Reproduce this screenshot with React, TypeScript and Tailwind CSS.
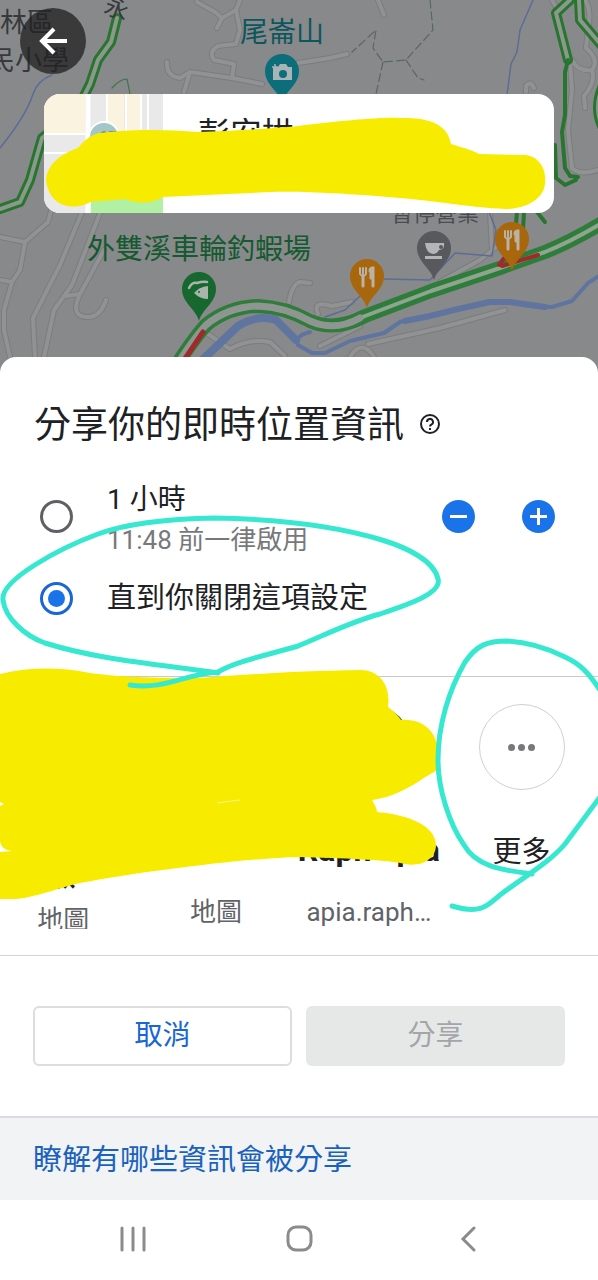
import React, { useState } from 'react';
import clsx from 'clsx';

interface ShareTarget {
  label: string[];
  detail?: string;
  avatar: string;
}

const targets: ShareTarget[] = [
  { label: ['', '款'], detail: '地圖', avatar: 'bg-slate-300' },
  { label: [''], detail: '地圖', avatar: 'bg-slate-300' },
  { label: ['Raph apia'], detail: 'apia.raph…', avatar: 'bg-[#2f6b3f]' },
];

const minorRoads = [
  'M197 2 L215 12 L222 18 M222 18 L217 28 M222 18 L236 10 L240 0 M236 10 L240 30 L236 44 L218 46 Q208 52 214 60 L234 64 L232 78',
  'M167 62 Q166 76 180 78 L190 72 L232 78 L262 84 M190 72 L184 92',
  'M298 63 L330 58 L347 54 M378 0 L384 15',
  'M585 0 Q592 10 588 30 L586 48 Q600 60 592 70 Q578 72 572 60 M592 70 Q596 82 584 96 L585 108',
  'M570 62 L572 90 L568 130 L572 168 Q580 176 598 170',
  'M526 92 V86 Q530 80 534 88 M0 237 L25 242 L48 222 L54 200 M25 242 L20 270 L12 282 L0 280 M12 282 L4 310 L4 330 L10 357',
  'M85 205 L60 265 L33 318 L35 357 M102 208 L72 285 L54 310 L44 357 M66 296 L80 294 L104 250 M80 294 Q70 316 86 317 Q100 318 106 300',
  'M289 302 Q292 284 300 282 L310 283 M208 334 L230 349 Q250 338 270 342 L285 356',
  'M318 314 Q312 300 332 306 L352 302 M320 346 L360 326 M350 357 Q362 338 374 357 M368 344 L440 328 L505 310',
  'M490 212 L492 250 M440 282 L480 260 L500 244 M552 0 L558 10',
];

const trafficRoads = [
  'M117 18 L111 42 L98 60 L90 84 L76 112 L42 138 L30 180 L20 202 L0 209',
  'M570 0 L556 13 L568 60',
  'M579 0 L580 20 L602 46',
  'M602 88 Q594 108 602 126',
];

const mainRoad =
  'M176 366 Q194 338 206 325 Q228 307 258 306 Q285 307 310 321 Q335 332 365 316 L431 291 L500 268 L545 252 Q570 242 602 223';

const DiningGlyph: React.FC = () => (
  <g stroke="#b9b2a5" strokeWidth="2" strokeLinecap="round" fill="none">
    <path d="M-7 -9 V-3 M-4 -9 V-3 M-1 -9 V-3 M-7 -3 Q-4 1 -1 -3" />
    <path d="M-4 -1 V9" strokeWidth="3" />
    <path d="M3 -6 Q3 -9 6 -9 V9 M4 -5 V1" strokeWidth="3" />
  </g>
);

const Pin: React.FC<{ x: number; y: number; color: string; children: React.ReactNode }> = ({ x, y, color, children }) => (
  <g transform={`translate(${x} ${y})`}>
    <path d="M0 31 C-3 19 -17 13 -17 -1 A17 17 0 0 1 17 -1 C17 13 3 19 0 31 Z" fill={color} />
    {children}
  </g>
);

const MapBackdrop: React.FC = () => (
  <svg
    className="absolute inset-0 w-full h-full"
    viewBox="0 0 598 373"
    preserveAspectRatio="xMidYMin slice"
    fontFamily='"Noto Sans CJK TC", sans-serif'
    aria-hidden="true"
  >
    <rect width="598" height="373" fill="#88898b" />
    <g fill="none" strokeLinejoin="round" strokeLinecap="round">
      {minorRoads.map((d) => (
        <path key={d} d={d} stroke="#7c7c7e" strokeWidth="6" />
      ))}
      {minorRoads.map((d) => (
        <path key={d} d={d} stroke="#919293" strokeWidth="4" />
      ))}
      <path d="M52 75 Q38 80 33 94 Q26 116 0 148" stroke="#5c6c96" strokeWidth="1.5" />
      <path d="M533 0 L520 30 L517 52 L511 64 L507 95" stroke="#5c6c96" strokeWidth="1.5" />
      <path d="M384 279 L430 280 L455 253 L492 256 L496 230 L489 212 M325 317 L345 310 L360 296" stroke="#5c6c96" strokeWidth="1.5" />
      <path d="M430 0 L433 30 L406 60 L383 62 L373 48 L376 30 L352 52 M383 62 L376 94 M406 60 L418 78 L424 80" stroke="#56695f" strokeWidth="1.2" strokeDasharray="8 4" />
      <path d="M112 88 Q120 79 127 79 L130 94" stroke="#3d7446" strokeWidth="1.2" />
      <path d="M196 366 L238 326 Q258 314 276 320 L296 340" stroke="#5f759f" strokeWidth="8" />
      <path d="M310 332 Q294 336 298 345 L312 353 L325 353 L350 341 L384 333 L400 322 L430 316 L458 309 L490 301 L510 302 L530 306 L552 307 L572 301 L588 283 L602 274" stroke="#5f759f" strokeWidth="4" />
      <path d="M405 321 L430 316 L458 309 L490 302 L510 302 L545 307" stroke="#5f759f" strokeWidth="6" />
      {trafficRoads.map((d) => (
        <path key={d} d={d} stroke="#28752f" strokeWidth="10" />
      ))}
      {trafficRoads.map((d) => (
        <path key={d} d={d} stroke="#8b988c" strokeWidth="4" />
      ))}
      <path d="M568 60 L565 72 L565 115 L562 132 L565 168 L570 176 L578 177 M555 145 L556 178 L565 185 L576 180 M517 212 L515 235 M524 212 L523 230 M537 212 L545 222" stroke="#28752f" strokeWidth="4" />
      <path d={mainRoad} stroke="#2f7d3a" strokeWidth="14" />
      <path d={mainRoad} stroke="#8fa590" strokeWidth="4" />
      <path d="M176 366 Q194 338 206 325 Q228 307 258 306 Q285 307 310 321 Q335 332 360 318" stroke="#8f9590" strokeWidth="7" />
      <path d="M180 366 L203 332" stroke="#a02a2a" strokeWidth="5" />
      <path d="M499 265 L507 254 M502 266 L538 255" stroke="#a02a2a" strokeWidth="4" />
    </g>
    <g fontSize="27" fill="#37393c">
      <text x="0" y="32">林區</text>
      <text x="-12" y="70">民小學</text>
      <text x="105" y="17" fontSize="24" transform="rotate(20 117 8)">永</text>
    </g>
    <text x="240" y="42" fontSize="28" fill="#0d565e">尾崙山</text>
    <text x="87" y="259" fontSize="28" fill="#14592f">外雙溪車輪釣蝦場</text>
    <text x="391" y="221" fontSize="22" fill="#4a4c4f">暫停營業</text>
    <Pin x={282} y={72} color="#0b6e7a">
      <path d="M-9 -5 H-4 L-2 -8 H4 L6 -5 H10 V8 H-9 Z" fill="#a9b4b5" />
      <circle cx="1" cy="2" r="4" fill="#0b6e7a" />
      <path d="M-10 -5 H-4 M-7 -8 V-2" stroke="#a9b4b5" strokeWidth="1.5" />
    </Pin>
    <Pin x={199} y={290} color="#17682f">
      <path d="M-5 3 Q0 -3 9 -4 V9 Q1 9 -5 3 Z" fill="#a9b5aa" />
      <path d="M-10 -2 Q-7 -8 -2 -7 Q4 -9 8 -8" stroke="#a9b5aa" strokeWidth="2.5" fill="none" strokeLinecap="round" />
      <circle cx="0" cy="2" r="1" fill="#17682f" />
    </Pin>
    <Pin x={434} y={249} color="#57595c">
      <path d="M-9 -6 H10 Q11 1 5 1 Q3 5 -1 5 Q-8 4 -9 -6 Z M-9 7 H8 V10 H-9 Z" fill="#b4b5b6" />
      <circle cx="7" cy="-2" r="2" fill="#57595c" />
    </Pin>
    <Pin x={367} y={277} color="#a8670c">
      <DiningGlyph />
    </Pin>
    <Pin x={512} y={240} color="#a8670c">
      <DiningGlyph />
    </Pin>
  </svg>
);

const PlaceThumbnail: React.FC = () => (
  <svg className="w-[119px] h-[119px] shrink-0" viewBox="0 0 119 119" aria-hidden="true">
    <rect width="119" height="119" fill="#e9e9ea" />
    <path d="M0 0 H41 V39 H0 Z M64 0 H80 V60 H64 Z M83 0 H96 V60 H83 Z" fill="#faf3e0" />
    <path d="M47 90 H119 V119 H47 Z" fill="#b2f0a4" />
    <path d="M44 0 V119" stroke="#fff" strokeWidth="5" />
    <path d="M0 40 H44 M0 59 H44 M63 0 V60 M82 0 V60 M97 0 V60 M104 0 V60" stroke="#fff" strokeWidth="2" />
    <circle cx="60" cy="43" r="15" fill="#a3c6c8" stroke="#fff" strokeWidth="2" />
    <path d="M56 42 Q60 36 64 42 M65 39 H73" stroke="#4c5040" strokeWidth="3" fill="none" />
  </svg>
);

const Markup: React.FC = () => (
  <svg className="absolute top-0 left-0 w-full h-auto pointer-events-none" viewBox="0 0 598 1280" aria-hidden="true">
    <g fill="#f7eb00">
      <path d="M46 180 C47 165 60 154 78 148 C88 136 95 132 110 132 C140 129 170 130 198 132 C230 131 280 128 298 126 C340 121 380 117 400 118 C430 117 448 125 451 144 C460 147 470 149 479 154 L525 155 C538 156 547 168 545 184 C543 200 525 209 505 209 C470 207 450 203 420 200 C370 195 310 191 270 192 L163 197 C150 205 135 203 125 199 L90 202 C80 209 50 212 46 180 Z" />
      <path d="M0 674 C30 667 60 667 90 673 C120 677 150 678 200 678 C250 674 300 671 360 670 C380 670 391 686 388 707 C394 711 398 716 401 720 C425 718 441 735 438 760 C438 768 436 772 432 773 C415 783 400 796 372 800 C374 804 377 808 377 812 C400 814 435 822 436 845 C436 860 420 867 405 864 C390 860 340 858 300 857 C250 858 150 870 80 883 C60 887 30 900 10 899 L0 899 V852 L12 851 C4 850 0 846 0 840 V806 L4 804 L0 802 Z" />
    </g>
    <path d="M217 803 L240 800" stroke="#f8f19a" strokeWidth="1" />
    <g fill="none" stroke="#36e8cf" strokeWidth="5" strokeLinecap="round" strokeLinejoin="round">
      <path d="M130 685 C165 690 185 674 218 672 C236 661 268 655 298 646 C325 635 350 622 380 614 C410 604 442 593 438 579 C434 560 405 547 382 540 C330 524 270 519 215 518 C165 519 125 524 98 534 C60 548 0 580 3 600 C5 618 25 636 45 643 C95 659 155 664 218 673" />
      <path d="M452 906 C482 915 488 905 500 895 C525 876 550 862 565 844 L600 797 M600 690 C588 672 580 664 565 657 C545 647 525 642 507 641 C487 641 477 645 465 662 C449 690 438 725 438 760 C438 790 450 825 464 845 C476 866 500 870 532 874" />
    </g>
  </svg>
);

const App: React.FC = () => {
  const [duration, setDuration] = useState('forever');
  const radioClass =
    'appearance-none shrink-0 w-[33px] h-[33px] rounded-full border-[3px] border-[#5f6063] p-[5px] bg-clip-content checked:border-[#1a67d2] checked:bg-[#1a73e8]';
  const stepClass = 'w-[33px] h-[33px] rounded-full bg-[#1a73e8] flex items-center justify-center';

  return (
    <div className="relative bg-white overflow-hidden text-[#202124] font-['Roboto','Noto_Sans_CJK_TC',sans-serif]" lang="zh-Hant">
      <header className="relative pt-2 pb-40">
        <MapBackdrop />
        <button
          aria-label="返回"
          className="relative ml-5 w-[66px] h-[66px] rounded-full bg-[#202020]/75 flex items-center justify-center"
        >
          <svg className="w-7 h-7" viewBox="0 0 28 28" fill="none" stroke="#fff" strokeWidth="4">
            <path d="M28 14 H4 M15 2 L3 14 L15 26" />
          </svg>
        </button>
        <div className="relative mt-5 ml-11 mr-11 flex bg-white rounded-2xl overflow-hidden">
          <PlaceThumbnail />
          <p className="pl-[35px] pt-5 text-[32px] leading-10">彭安拱</p>
        </div>
      </header>

      <main className="relative -mt-4 bg-white rounded-t-2xl pt-[45px]">
        <div className="px-[34px] flex items-center gap-4">
          <h1 className="text-[37px] leading-[48px]">分享你的即時位置資訊</h1>
          <button aria-label="說明" className="pb-1">
            <svg className="w-5 h-5" viewBox="0 0 20 20" fill="none" stroke="#202124" strokeWidth="2">
              <circle cx="10" cy="10" r="9" />
              <path d="M7 8 A3 3 0 1 1 11.5 10.5 Q10 11.3 10 12.5 M10 14 V16" />
            </svg>
          </button>
        </div>

        <div className="mt-[30px] pl-10 pr-[43px] flex items-start">
          <input
            id="one-hour"
            type="radio"
            name="duration"
            className={clsx(radioClass, 'mt-5')}
            checked={duration === 'hour'}
            onChange={() => setDuration('hour')}
          />
          <label htmlFor="one-hour" className="pl-[34px] flex-1">
            <span className="block text-[28px] leading-10">1 小時</span>
            <span className="block text-[26px] leading-10 text-[#77787b]">11:48 前一律啟用</span>
          </label>
          <div className="mt-5 flex gap-[47px]">
            <button aria-label="減少" className={stepClass}>
              <svg className="w-[17px] h-[17px]" viewBox="0 0 17 17" stroke="#fff" strokeWidth="3">
                <path d="M0 8.5 H17" />
              </svg>
            </button>
            <button aria-label="增加" className={stepClass}>
              <svg className="w-[17px] h-[17px]" viewBox="0 0 17 17" stroke="#fff" strokeWidth="3">
                <path d="M0 8.5 H17 M8.5 0 V17" />
              </svg>
            </button>
          </div>
        </div>

        <div className="mt-[18px] pl-10 flex items-center">
          <input
            id="until-off"
            type="radio"
            name="duration"
            className={radioClass}
            checked={duration === 'forever'}
            onChange={() => setDuration('forever')}
          />
          <label htmlFor="until-off" className="pl-[34px] text-[29px] leading-10">
            直到你關閉這項設定
          </label>
        </div>

        <section className="mt-[58px] border-t border-[#c9cacc] pb-[26px]">
          <div className="-ml-[13px] h-[252px] pt-[27px] grid grid-cols-4 overflow-hidden">
            {targets.map((target, i) => (
              <button key={i} className="flex flex-col items-center">
                <span className={clsx('w-[86px] h-[86px] shrink-0 rounded-full', target.avatar)} />
                <span className="mt-[46px] min-h-12 text-[32px] leading-7 font-bold whitespace-nowrap">
                  {target.label.map((line, n) => (
                    <span key={n} className={clsx('block min-h-7', n > 0 && 'text-2xl leading-7')}>{line}</span>
                  ))}
                </span>
                <span className="mt-3 text-[26px] leading-8 text-[#5f6368]">{target.detail}</span>
              </button>
            ))}
            <button className="flex flex-col items-center">
              <span className="w-[86px] h-[86px] shrink-0 rounded-full border border-[#cfd0d2] flex items-center justify-center gap-[3px]">
                <span className="w-[7px] h-[7px] rounded-full bg-[#77787b]" />
                <span className="w-[7px] h-[7px] rounded-full bg-[#77787b]" />
                <span className="w-[7px] h-[7px] rounded-full bg-[#77787b]" />
              </span>
              <span className="mt-[46px] text-[29px] leading-8">更多</span>
            </button>
          </div>
        </section>

        <div className="border-t border-[#d2d4d7] px-[33px] pt-[50px] pb-[50px] grid grid-cols-2 gap-[14px]">
          <button className="h-[60px] rounded-md border-2 border-[#dcdddf] text-[28px] text-[#1967d2]">取消</button>
          <button disabled className="h-[60px] rounded-md bg-[#e6e8e8] text-[28px] text-[#a3a5a7]">分享</button>
        </div>

        <footer className="border-t-2 border-[#dadce0] bg-[#f1f3f5] px-[33px] pt-[22px] pb-5">
          <a href="#" className="block text-[29px] leading-10 text-[#1a62bd]">瞭解有哪些資訊會被分享</a>
        </footer>
      </main>

      <nav className="h-20 pb-1 px-[50px] grid grid-cols-3">
        <button aria-label="最近使用" className="flex items-center justify-center">
          <svg className="w-7 h-7" viewBox="0 0 28 28" fill="none" stroke="#8b8b8b" strokeWidth="3" strokeLinecap="round">
            <path d="M3 4 V26 M14 4 V26 M25 4 V26" />
          </svg>
        </button>
        <button aria-label="主畫面" className="flex items-center justify-center">
          <svg className="w-7 h-7" viewBox="0 0 28 28" fill="none" stroke="#8b8b8b" strokeWidth="3">
            <rect x="3" y="3" width="23" height="23" rx="8" />
          </svg>
        </button>
        <button aria-label="上一頁" className="flex items-center justify-center">
          <svg className="w-7 h-7" viewBox="0 0 28 28" fill="none" stroke="#8b8b8b" strokeWidth="3" strokeLinecap="round">
            <path d="M23 4 L12 15 L23 26" />
          </svg>
        </button>
      </nav>

      <Markup />
    </div>
  );
};

export default App;
